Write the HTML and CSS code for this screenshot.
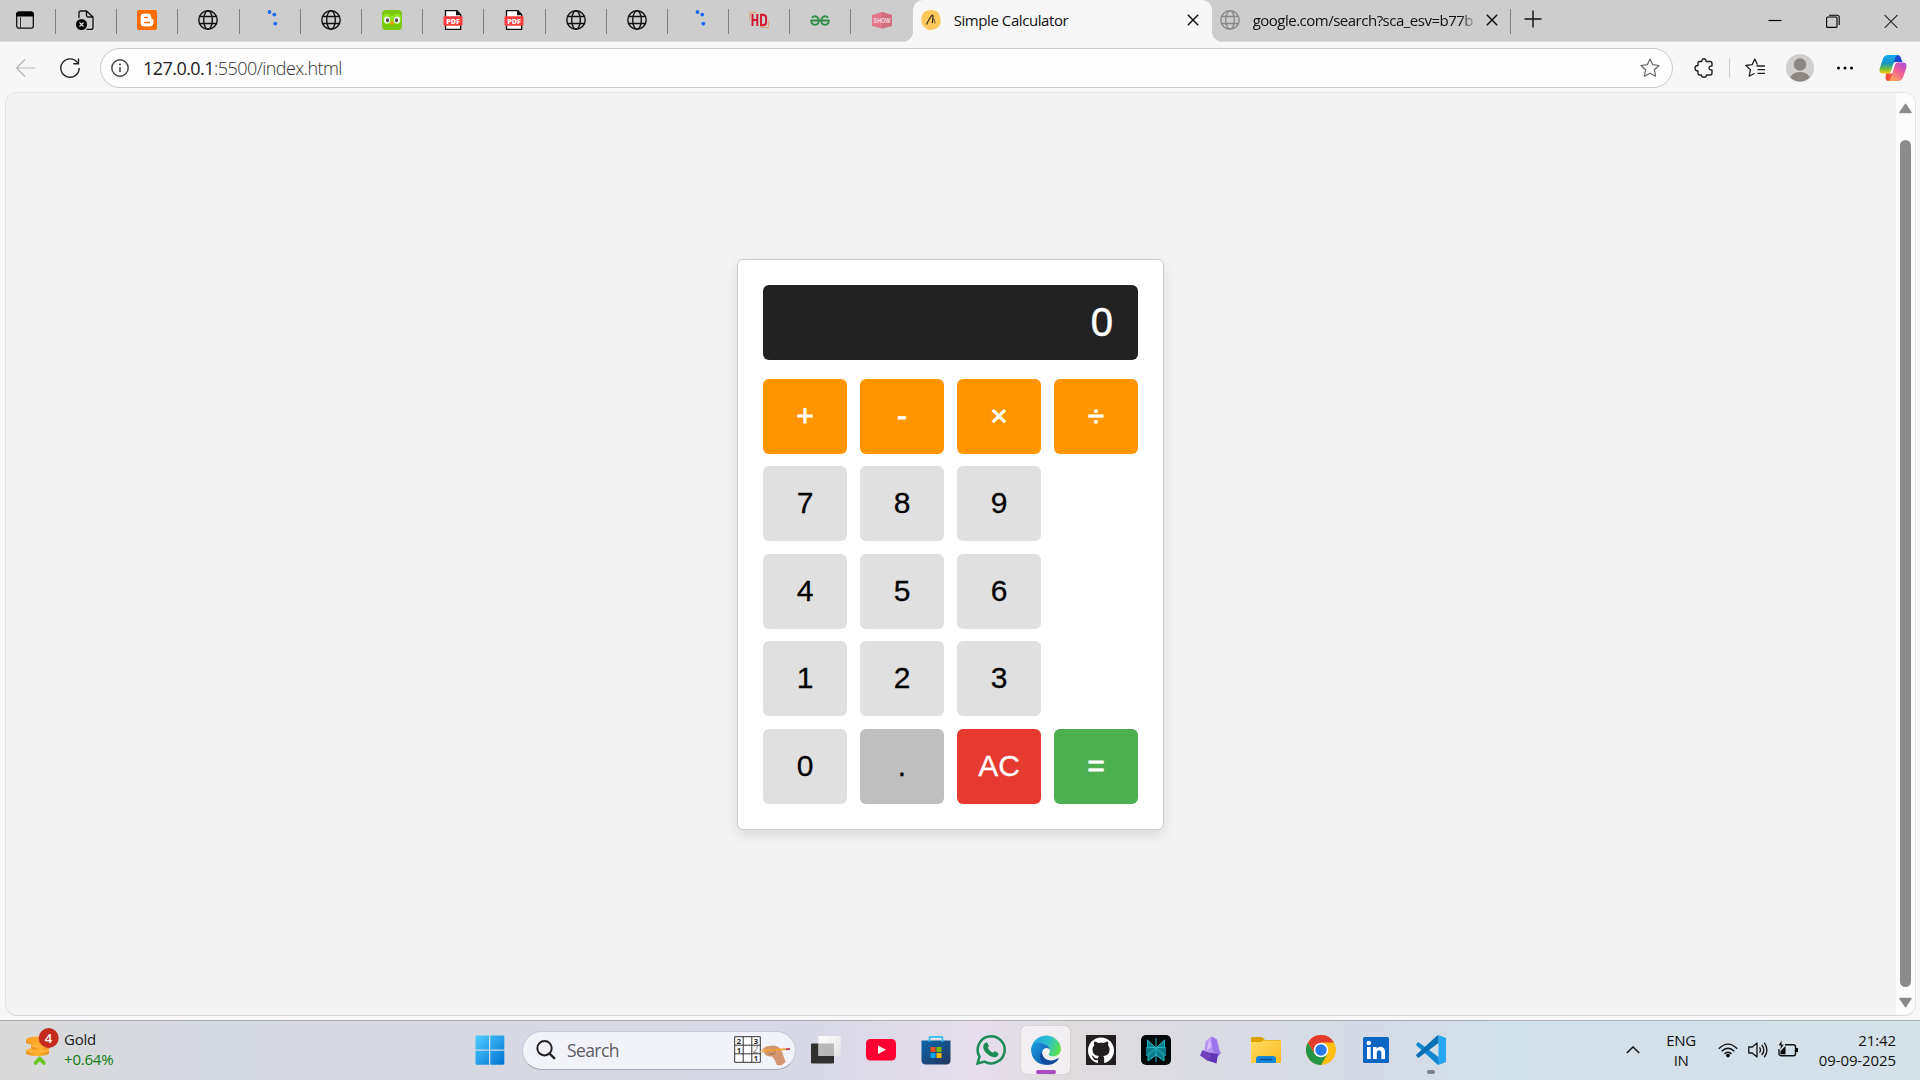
FILE: index.html
```html
<!DOCTYPE html>
<html lang="en">
<head>
<meta charset="utf-8">
<title>Simple Calculator</title>
<link rel="stylesheet" href="styles.css">
</head>
<body>
<svg class="defs" width="0" height="0" aria-hidden="true">
  <symbol id="globe" viewBox="0 0 20 20"><g fill="none" stroke="currentColor" stroke-width="1.4"><circle cx="10" cy="10" r="9.2"/><ellipse cx="10" cy="10" rx="4.3" ry="9.2"/><path d="M1.7 6.5h16.6M1.7 13.5h16.6"/></g></symbol>
  <symbol id="dots" viewBox="0 0 20 20"><g fill="#1a69f5"><circle cx="9.500" cy="2" r="1.9"/><circle cx="14.300" cy="4.600" r="1.9"/><circle cx="15.300" cy="13.600" r="1.9"/></g></symbol>
  <symbol id="cross" viewBox="0 0 12 12"><path d="M.8.8l10.400 10.400M11.200.8L.8 11.200" stroke="currentColor" stroke-width="1.500" fill="none"/></symbol>
  <symbol id="star" viewBox="0 0 20 20"><path d="M10 1l2.700 5.700 6.300.8-4.600 4.300 1.200 6.400L10 15.200l-5.600 3 1.200-6.400L1 7.500l6.300-.8z" fill="none" stroke="currentColor" stroke-width="1.200" stroke-linejoin="round"/></symbol>
</svg>

<header class="tabs">
  <div class="pin first"><svg class="ic" viewBox="0 0 20 20"><rect x="1.700" y="2.200" width="16.600" height="16" rx="2.500" fill="none" stroke="#111" stroke-width="1.300"/><path d="M1 6.500V4.500a3 3 0 0 1 3-3h12a3 3 0 0 1 3 3v2z" fill="#000"/><path d="M5.500 7v11" stroke="#333"/></svg></div>
  <div class="pin"><svg class="ic" viewBox="0 0 20 20"><path d="M3 8V3a2 2 0 0 1 2-2h5.500l6.500 6v10.500a2 2 0 0 1-2 2h-4.500M10.500 1v4.500a1.500 1.500 0 0 0 1.500 1.500h5" fill="none" stroke="#111" stroke-width="1.300"/><circle cx="5.500" cy="14.500" r="5.500"/><path d="M3.500 12.500l4 4M7.500 12.500l-4 4" stroke="#ddd" stroke-width="1.200"/></svg></div>
  <div class="pin"><svg class="ic" viewBox="0 0 20 20"><rect width="20" height="20" rx="2" fill="#ff6c00"/><path d="M7.500 3.500h3.200a3.500 3.500 0 0 1 3.500 3.500c0 1.700.3 1.900 1.200 2 .8.100 1 .5 1 1.200v2.600a3.800 3.800 0 0 1-3.800 3.700H7.400a3.800 3.800 0 0 1-3.800-3.700V7.200a3.800 3.800 0 0 1 3.900-3.700z" fill="#fff"/><path d="M7.700 7.500h2.500M7.700 12.500h4.700" stroke="#ff6c00" stroke-width="1.600" stroke-linecap="round"/></svg></div>
  <div class="pin"><svg class="ic"><use href="#globe"/></svg></div>
  <div class="pin"><svg class="ic"><use href="#dots"/></svg></div>
  <div class="pin"><svg class="ic"><use href="#globe"/></svg></div>
  <div class="pin"><svg class="ic" viewBox="0 0 20 20"><rect width="20" height="20" rx="4" fill="#78c800"/><path d="M1 5q4-3 9 1 5-4 9-1v5q-1 5-6 4H7q-5 1-6-4z" fill="#91e216"/><ellipse cx="5" cy="10" rx="3" ry="3.600" fill="#fff"/><ellipse cx="15" cy="10" rx="3" ry="3.600" fill="#fff"/><ellipse cx="5.500" cy="10.300" rx="1.500" ry="2.100" fill="#444"/><ellipse cx="14.500" cy="10.300" rx="1.500" ry="2.100" fill="#444"/><path d="M7.800 12.200q2.200-1.500 4.400 0L10 15.500z" fill="#ff9400"/></svg></div>
  <div class="pin"><svg class="ic" viewBox="0 0 20 20"><path d="M2.500 .7h11.500l3.700 4v14.600H2.500z" fill="#fff" stroke="#111" stroke-width="1.300"/><path d="M13 .5v4.700h5z" fill="#111"/><rect x=".5" y="6.300" width="19" height="9.500" rx="1" fill="#fb3d3f"/><text class="pdf-label" x="10" y="13.700">PDF</text></svg></div>
  <div class="pin"><svg class="ic" viewBox="0 0 20 20"><path d="M2.500 .7h11.500l3.700 4v14.600H2.500z" fill="#fff" stroke="#111" stroke-width="1.300"/><path d="M13 .5v4.700h5z" fill="#111"/><rect x=".5" y="6.300" width="19" height="9.500" rx="1" fill="#fb3d3f"/><text class="pdf-label" x="10" y="13.700">PDF</text></svg></div>
  <div class="pin"><svg class="ic"><use href="#globe"/></svg></div>
  <div class="pin"><svg class="ic"><use href="#globe"/></svg></div>
  <div class="pin"><svg class="ic"><use href="#dots"/></svg></div>
  <div class="pin"><svg class="ic" viewBox="0 0 20 20"><path d="M.6 9V2.500h7M19.400 11v6.500h-8" fill="none" stroke="#e9a066"/><path d="M3.500 4v12M8.300 4v12M3.500 10h4.800M12 4.800v10.400h1.500q3.600 0 3.600-3V7.800q0-3-3.600-3z" fill="none" stroke="#d3152b" stroke-width="1.900"/></svg></div>
  <div class="pin"><svg class="ic" viewBox="0 0 20 20"><path d="M1.800 7.600q3-2.400 5.400-.4 2.200 2.200 1.400 5-1 2.600-3.700 2.600-3.700-.3-3.700-4.300h17.600q0 4-3.700 4.300-2.700 0-3.700-2.600-.8-2.800 1.400-5 2.400-2 5.400.4" fill="none" stroke="#2f8d46" stroke-width="1.800"/></svg></div>
  <div class="pin last"><svg class="ic" viewBox="0 0 20 20"><path d="M0 5l10-3 10 3v11l-10 2.500L0 16z" fill="#e2778b"/><path d="M10 2v16.500L20 16V5z" fill="#cf6f80"/><text class="show-label" x="10" y="13.300" transform="translate(3.200 0) scale(.68 1)">SHOW</text></svg></div>
  <div class="tab active">
    <svg class="ic" viewBox="0 0 20 20"><path d="M3 2q7-4 14 0 4 6 2 13-2 4-9 5-6 0-9-6-2-7 2-12z" fill="#ffc95c"/><path d="M5.500 14.500Q9.500 6 11.500 5q.9 0-.2 8" fill="none" stroke="#332917" stroke-width="1.200"/><path d="M11.300 13q.3-5 1.300-4.500t1.400 5" fill="none" stroke="#332917" stroke-width=".7"/></svg>
    <span class="title">Simple Calculator</span>
    <svg class="x"><use href="#cross"/></svg>
  </div>
  <div class="tab other">
    <svg class="ic"><use href="#globe"/></svg>
    <span class="title">google.com/search?sca_esv=b77b</span>
    <svg class="x"><use href="#cross"/></svg>
  </div>
  <svg class="plus" viewBox="0 0 18 18"><path d="M9 .5v17M.5 9h17" stroke="#111" stroke-width="1.400"/></svg>
  <div class="win">
    <svg viewBox="0 0 14 14"><path d="M.5 6.500h13" stroke="#000" stroke-width="1.200"/></svg>
    <svg viewBox="0 0 14 14"><rect x=".6" y="3" width="10.400" height="10.400" rx="1" fill="none" stroke="#000" stroke-width="1.100"/><path d="M3 1.200h8.200a2 2 0 0 1 2 2V11" fill="none" stroke="#000" stroke-width="1.100"/></svg>
    <svg viewBox="0 0 14 14"><path d="M.7 1.200l12.600 12.600M13.300 1.200L.7 13.800" stroke="#222" stroke-width="1.100"/></svg>
  </div>
</header>

<nav class="toolbar">
  <svg class="back" viewBox="0 0 20 20"><path d="M20 10H1.500M10 1.500L1.500 10l8.500 8.500" fill="none" stroke="#b5b5b5" stroke-width="1.200"/></svg>
  <svg class="reload" viewBox="0 0 20 20"><path d="M18 5.500A9.200 9.200 0 1 0 19.200 10M18.500.5v5.200h-5.200" fill="none" stroke="#222" stroke-width="1.400"/></svg>
  <div class="address">
    <svg class="info" viewBox="0 0 18 18"><circle cx="9" cy="9" r="8.200" fill="none" stroke="#444" stroke-width="1.400"/><path d="M9 8v5" stroke="#444" stroke-width="1.500"/><circle cx="9" cy="5.500" r="1" fill="#444"/></svg>
    <span class="url"><b>127.0.0.1</b>:5500/index.html</span>
    <svg class="fav"><use href="#star"/></svg>
  </div>
  <div class="tools">
    <svg class="puzzle" viewBox="0 0 20 20"><path d="M5 3.500h2.800C7.500-.1 12.500-.1 12.200 3.500H16a2 2 0 0 1 2 2V8c-4-.6-4 4.600 0 4v3a2 2 0 0 1-2 2h-3.500c0 3-5 3-5 0H5.500A1.500 1.500 0 0 1 4 15.500V13C0 13 0 7.500 4 7.500V5a1.500 1.500 0 0 1 1-1.500z" fill="none" stroke="#222" stroke-width="1.400" stroke-linejoin="round"/></svg>
    <i class="rule"></i>
    <svg class="favs" viewBox="0 0 20 20"><path d="M12.500 6.700L9.800 1 7.100 6.700.8 7.500l4.600 4.300-1.200 6.400 5.400-3" fill="none" stroke="#222" stroke-width="1.300" stroke-linejoin="round"/><path d="M11.500 8H20M12.500 11.700H20M12.500 15.400H20" stroke="#222" stroke-width="1.300"/></svg>
    <svg class="avatar" viewBox="0 0 28 28"><clipPath id="av"><circle cx="14" cy="14" r="13.500"/></clipPath><circle cx="14" cy="14" r="14" fill="#d1cfcd"/><circle cx="14" cy="10.500" r="6.200" fill="#8c8682"/><ellipse cx="14" cy="26" rx="10.500" ry="8" fill="#8c8682" clip-path="url(#av)"/></svg>
    <svg class="more" viewBox="0 0 18 18"><circle cx="2.500" cy="9" r="1.500"/><circle cx="9" cy="9" r="1.500"/><circle cx="15.500" cy="9" r="1.500"/></svg>
    <svg class="copilot" viewBox="0 0 28 28"><defs><linearGradient id="c1" x1="0" y1="0" x2="0" y2="1"><stop offset="0" stop-color="#18a8f5"/><stop offset=".45" stop-color="#1597c4"/><stop offset=".75" stop-color="#72bd3b"/><stop offset="1" stop-color="#ffd00a"/></linearGradient><linearGradient id="c2" x1="1" y1="0" x2=".3" y2="1"><stop offset="0" stop-color="#a34ae8"/><stop offset=".5" stop-color="#ee5c99"/><stop offset="1" stop-color="#ffa65a"/></linearGradient></defs><path d="M15 1h4q2 0 2.700 2.500L23.500 8H17q-3 0-4 3z" fill="#1b46ce"/><path d="M7 19h8l-3 8H9q-2 0-2.500-3z" fill="#f3503b"/><path d="M9 1h10q-2.200.5-3 3.500l-3.700 12Q11.500 19.500 9 19.500H4Q-.5 19.500.8 14L4 4.500Q5.300 1 9 1z" fill="url(#c1)"/><path d="M19 27H9q2.200-.5 3-3.500l3.700-12Q16.500 8.500 19 8.500h5q4.500 0 3.200 5.500L24 23.500Q22.700 27 19 27z" fill="url(#c2)"/><path d="M13.400 13.500q1-4 3.300-4.500-.8.600-1.400 2.800l-2.100 6.500q-.7 2.200-3 2 1.200-.5 1.700-2.500z" fill="#fff"/></svg>
  </div>
</nav>

<main class="window">
  <div class="page">
    <section class="calculator">
      <div class="display">0</div>
      <div class="keys">
        <button class="key op">+</button><button class="key op">-</button><button class="key op">×</button><button class="key op">÷</button>
        <button class="key">7</button><button class="key">8</button><button class="key">9</button><span></span>
        <button class="key">4</button><button class="key">5</button><button class="key">6</button><span></span>
        <button class="key">1</button><button class="key">2</button><button class="key">3</button><span></span>
        <button class="key">0</button><button class="key dot">.</button><button class="key clear">AC</button><button class="key equals">=</button>
      </div>
    </section>
  </div>
  <div class="scroll">
    <svg viewBox="0 0 13 11"><path d="M6.500 1.300L12 9.500H1z" fill="#8b8b8b" stroke="#8b8b8b" stroke-width="1.500" stroke-linejoin="round"/></svg>
    <div class="thumb"></div>
    <svg viewBox="0 0 13 11"><path d="M6.500 9.700L12 1.500H1z" fill="#8b8b8b" stroke="#8b8b8b" stroke-width="1.500" stroke-linejoin="round"/></svg>
  </div>
</main>

<footer class="taskbar">
  <div class="widget">
    <svg class="coins" viewBox="0 0 34 38"><defs><linearGradient id="co"><stop offset="0" stop-color="#f58a1a"/><stop offset=".5" stop-color="#ffb52e"/><stop offset="1" stop-color="#f08a18"/></linearGradient></defs><path d="M0 22.500v2.500c0 4 23 4 23 0v-2.500z" fill="url(#co)"/><ellipse cx="11.500" cy="22.500" rx="11.500" ry="2.800" fill="#ffb13a"/><path d="M5 17.500v2c0 4 19 4 19 0v-2z" fill="url(#co)"/><ellipse cx="14.500" cy="17.500" rx="9.500" ry="2.500" fill="#ffb13a"/><path d="M0 11.500v2.500c0 4 22 4 22 0v-2.500z" fill="url(#co)"/><ellipse cx="11" cy="11.500" rx="11" ry="3" fill="#fda52b"/><path d="M9.500 35l4.200-4.500 4.200 4.500" fill="none" stroke="#67c51c" stroke-width="3.600" stroke-linejoin="round" stroke-linecap="round"/><circle cx="22.700" cy="10" r="10" fill="#c42b1c"/><text x="22.500" y="14.600" text-anchor="middle" font-family="Open Sans, sans-serif" font-size="13" font-weight="600" fill="#fff">4</text></svg>
    <div class="quote"><span>Gold</span><span class="up">+0.64%</span></div>
  </div>
  <div class="apps">
    <div class="app start"><svg width="30" height="30" viewBox="0 0 30 30"><defs><linearGradient id="w" x1="0" y1="0" x2="1" y2="1"><stop offset="0" stop-color="#4fd0ff"/><stop offset="1" stop-color="#0070d2"/></linearGradient></defs><path d="M1.500.5H14v14H.5v-13zM15.300.5h13l1 1v13h-14zM.5 15.700H14v14H1.500l-1-1zM15.300 15.700h14v13l-1 1h-13z" fill="url(#w)"/></svg></div>
    <div class="search">
      <svg class="lens" viewBox="0 0 20 20"><circle cx="8.500" cy="8.200" r="7.200" fill="none" stroke="#222" stroke-width="2"/><path d="M13.500 13.500l4.700 4.700" stroke="#222" stroke-width="2.400" stroke-linecap="round"/></svg>
      <span>Search</span>
      <svg class="sudoku" viewBox="0 0 57 30"><path d="M.7.700h25.600v25.600H.7zM9.200.7v25.600M17.800.7v25.600M.7 9.200h25.600M.7 17.800h25.600" fill="#fff" stroke="#333" stroke-width="1"/><g font-family="Open Sans, sans-serif" font-size="7.500" font-weight="700" text-anchor="middle" fill="#222"><text x="5" y="7.700">2</text><text x="22" y="7.700">3</text><text x="5" y="16.500">1</text><text x="22" y="25">1</text><text x="21.500" y="17" font-size="10" font-weight="400" fill="#777">2</text></g><path d="M27.500 15q3-5 7.500-5l5-.5q6 1 8 6l3.500 10.500q-4 4.500-8.500 3-2-5.500-5-8.500-7 0-7.500-3.500z" fill="#d29670"/><path d="M32 14.500q4 1 6-1l4 2M35 18q3 1 6-1" fill="none" stroke="#a86d4b" stroke-width="1"/><path d="M25 16l5-2.800.3 3.500z" fill="#efc995"/><path d="M29.500 14.700l22-1.500" stroke="#f2a529" stroke-width="1.800"/><path d="M51.500 13.200l4.500-.3" stroke="#c4475b" stroke-width="2"/></svg>
    </div>
    <div class="app"><svg width="30" height="30" viewBox="0 0 30 30"><defs><linearGradient id="tv" x1="0" y1="0" x2="1" y2="1"><stop offset="0" stop-color="#fff"/><stop offset="1" stop-color="#e2e2e2"/></linearGradient></defs><rect y="8.500" width="23" height="20" rx="1" fill="#30302e"/><rect x="7.500" y="1" width="22.300" height="20" rx="1" fill="url(#tv)"/><path d="M7.500 8.500H23V21H7.500z" fill="#b8b8b8"/></svg></div>
    <div class="app"><svg width="30" height="30" viewBox="0 0 30 30"><rect y="4" width="30" height="21.500" rx="4.500" fill="#ff0033"/><path d="M12 10.500v8.500l8-4.200z" fill="#fff"/></svg></div>
    <div class="app"><svg width="30" height="30" viewBox="0 0 30 30"><defs><linearGradient id="st" x1="0" y1="0" x2=".8" y2="1"><stop offset="0" stop-color="#0a68ae"/><stop offset="1" stop-color="#213a63"/></linearGradient></defs><path d="M.5 5.500h29V25q0 4.500-4.500 4.500H5Q.5 29.500.5 25z" fill="url(#st)"/><path d="M8.500 7V3q0-1.200 1.200-1.200h10.600q1.200 0 1.200 1.200v4" fill="none" stroke="#31bdf3" stroke-width="1.700"/><path d="M9.500 12h5v5h-5z" fill="#f25022"/><path d="M15.500 12h5v5h-5z" fill="#7fba00"/><path d="M9.500 18h5v5h-5z" fill="#00a4ef"/><path d="M15.500 18h5v5h-5z" fill="#ffb900"/></svg></div>
    <div class="app"><svg width="30" height="30" viewBox="0 0 30 30"><path d="M1.600 28.400l1.900-6.800A13.500 13.500 0 1 1 8.600 26.600z" fill="none" stroke="#1d8c57" stroke-width="2.500"/><path d="M10 7.500c.9-.3 1.400 0 1.700.8l1 2.400c.2.600 0 1-.9 2 1.300 2.600 3 4 5.400 5.100 1.100-1.500 1.500-1.700 2.100-1.400l2.600 1.300c.8.400.6 1.500.2 2.500-1 2.100-3.800 2.500-6.700 1.300-4.500-1.800-8-5.700-8.200-9.400-.1-2 1.300-4 2.800-4.600z" fill="#1d8c57"/></svg></div>
    <div class="app current"><svg width="30" height="30" viewBox="0 0 30 30"><defs><linearGradient id="e1" x1="0" y1=".3" x2="1" y2=".6"><stop offset="0" stop-color="#2aa4df"/><stop offset=".5" stop-color="#27bfd0"/><stop offset="1" stop-color="#62e447"/></linearGradient><linearGradient id="e2" x1="0" y1="0" x2="1" y2="1"><stop offset="0" stop-color="#1c9be0"/><stop offset="1" stop-color="#0c52a8"/></linearGradient></defs><path d="M.7 11.500A15 15 0 0 1 30 13.500c0 5-3.700 7.800-7.500 7.800-3.700 0-4.800-1-4.800-1.900 0-1 1.300-1.300 1.300-4.100 0-4-5.500-8-11-6.800-4 .9-6.500 2-7.300 3z" fill="url(#e1)"/><path d="M.2 13C1 8.500 5.500 7.500 9 7.700c5 .1 10 3.600 10 7.600-1.600-3.500-7-3-8 2.200-.8 5 3.700 11.800 8 11.700C9.500 32-1 25 .2 13z" fill="url(#e2)"/><path d="M11.200 16.500c-.6 4.200 2.800 9 8.800 9 3.500 0 6-1.600 7-2.200.6-.3 1 .1.600.8C24 30 16 31.500 12 28 8 24.500 8.500 19 11.200 16.500z" fill="#10499b"/></svg><i class="mark"></i></div>
    <div class="app"><svg width="30" height="30" viewBox="0 0 30 30"><path d="M0 0h30v30H0z" fill="#221e20"/><circle cx="15" cy="15.500" r="13" fill="#fff"/><path d="M12 29v-4c-3.500.8-4.500-1-5.500-3-.5-.8-1-1.200-1-1.500 1.700-.2 2.600 1.800 3.500 2.500 1 .7 2.200.5 3 .2 0-1 .5-1.700 1-2.200-4-.5-6.500-2-6.500-6.500 0-1.800.7-3.200 1.700-4.300-.4-1-.3-2.600.2-3.700 1.500 0 2.800.8 3.800 1.600 2-.5 4-.5 5.800 0 1-.8 2.300-1.600 3.800-1.600.5 1.100.6 2.700.2 3.700 1 1.100 1.600 2.500 1.600 4.300 0 4.500-2.500 6-6.500 6.500.7.600 1.100 1.500 1.100 3V29z" fill="#221e20"/></svg></div>
    <div class="app"><svg width="30" height="30" viewBox="0 0 30 30"><rect width="30" height="30" rx="5" fill="#020708"/><path d="M15 13L6.500 5v7H5v9h2v5l8-6 8 6v-5h2v-9h-1.500V5z" fill="#0e7d8b"/><path d="M15 3v24M15 13L6.500 5v7.500h17V5zM15 13l-8 7v6l8-6 8 6v-6z" fill="none" stroke="#21b7c8" stroke-width="1"/></svg></div>
    <div class="app"><svg width="30" height="30" viewBox="0 0 30 30"><path d="M15.500 1.500q-4 3-6 5L8 18l6 2 8-3 1-5-2-8z" fill="#b894f5"/><path d="M15.500 1.500l5 3.500 2 8 2.500 5-3.500 4-5-7z" fill="#9875e8"/><path d="M6.500 15L4 20.500l8 5.500 4-7z" fill="#7040bd"/><path d="M14 17.500l8 1.500-1.500 9.500-9-3 3-4z" fill="#6334b8"/><path d="M13.500 4l-3 12 5-5z" fill="#d3bdfb"/></svg></div>
    <div class="app"><svg width="30" height="30" viewBox="0 0 30 30"><defs><linearGradient id="fo" x1="0" y1="0" x2="1" y2="1"><stop offset="0" stop-color="#ffdc60"/><stop offset="1" stop-color="#fcbc20"/></linearGradient></defs><path d="M1 2h9q2 0 3 2l1 1h15.500V10H0V3z" fill="#dca000"/><path d="M0 7h10l2.500-1.500H30V27q0 1-1 1H1q-1 0-1-1z" fill="url(#fo)"/><path d="M5 28v-4q0-3 3-3h14q3 0 3 3v4z" fill="#1386d8"/><path d="M9 24.500h12" stroke="#0b559b" stroke-width="1.400" stroke-linecap="round"/></svg></div>
    <div class="app"><svg width="30" height="30" viewBox="0 0 30 30"><circle cx="15" cy="15" r="15" fill="#fdbd13"/><path d="M2 7.500A15 15 0 0 0 15 30l6.500-11.500-13 0z" fill="#259447"/><path d="M2 7.500A15 15 0 0 1 28 7.500H15v9l-6.500 2z" fill="#e33b2e"/><circle cx="15" cy="15" r="7.300" fill="#fff"/><circle cx="15" cy="15" r="5.700" fill="#2979ed"/></svg></div>
    <div class="app"><svg width="30" height="30" viewBox="0 0 30 30"><rect x="2" y="2" width="26" height="26" rx="1.500" fill="#0a66c2"/><circle cx="7.800" cy="8" r="2.200" fill="#fff"/><path d="M6 12h3.700v12H6zM12 12h3.600v1.700c1.700-3 8.400-3 8.400 3V24h-3.700v-6.300c0-3.500-4.500-3.300-4.500 0V24H12z" fill="#fff"/></svg></div>
    <div class="app open"><svg width="30" height="30" viewBox="0 0 30 30"><path d="M22.500 0L30 3v24l-7.500 3z" fill="#25a7f2"/><path d="M22.500 22L3 7.500q-.8-.6-1.500 0L.5 9q-.7.800 0 1.500L22 30l1-1z" fill="#1389d2"/><path d="M22.500 8L3 22.500q-.8.600-1.500 0L.5 21q-.7-.8 0-1.500L21.500.300l1 .7z" fill="#0871b5"/></svg><i class="mark"></i></div>
  </div>
  <div class="tray">
    <svg class="chev" viewBox="0 0 14 8"><path d="M.8 7L7 1l6.200 6" fill="none" stroke="#111" stroke-width="1.500"/></svg>
    <div class="lang"><span>ENG</span><span>IN</span></div>
    <svg class="ic" viewBox="0 0 20 20"><g fill="none" stroke="#111" stroke-width="1.400"><path d="M.8 8.700q9.200-9.200 18.400 0M3.700 11.300q6.300-6.300 12.600 0M6.500 13.900q3.500-3.500 7 0"/></g><circle cx="10" cy="15.600" r="1.800"/></svg>
    <svg class="ic" viewBox="0 0 20 20"><g fill="none" stroke="#111" stroke-width="1.300"><path d="M.8 7h3.500L9 3v14l-4.700-4H.8z" stroke-linejoin="round"/><path d="M11.500 7.300q2 2.700 0 5.400M13.800 5q4 5 0 10M16.200 2.700q5.500 7.300 0 14.600"/></g></svg>
    <svg class="ic bat" viewBox="0 0 20 20"><path d="M7 4.700h8.500a2 2 0 0 1 2 2v7a2 2 0 0 1-2 2H3a2 2 0 0 1-2-2V9" fill="none" stroke="#111" stroke-width="1.400"/><path d="M18 8h1.500q.5 0 .5.500v3q0 .5-.5.500H18z"/><path d="M2.500 14.300V11l5-5v8.300z"/><path d="M3.700 0L.5 5.500h2.300L2 10l4-5.500H3.700z" stroke="#d6e2ea" stroke-width=".4"/></svg>
    <div class="clock"><span>21:42</span><span>09-09-2025</span></div>
  </div>
</footer>
</body>
</html>
```
FILE: styles.css
```css
* { box-sizing: border-box; }
body { margin: 0; width: 1920px; height: 1080px; overflow: hidden; display: flex; flex-direction: column; background: #f7f7f7; color: #111; font-family: "Open Sans", "Noto Sans", sans-serif; }
svg { display: block; flex: none; }
.defs { position: absolute; }
.ic { width: 20px; height: 20px; }

/* Tab strip */
.tabs { display: flex; height: 42px; flex: none; background: #cdcdcd; border-bottom: 1px solid #dedede; }
.pin { width: 61.2px; height: 40px; flex: none; display: flex; align-items: center; justify-content: center; padding-right: 1px; background: linear-gradient(#808080, #808080) right 9px / 1px 25px no-repeat; }
.pin.first { width: 56px; padding-right: 6px; }
.pin.last { background: none; }
.pdf-label { font: 800 7.200px "Open Sans", sans-serif; fill: #fff; text-anchor: middle; }
.show-label { font: 700 8px "Liberation Sans", sans-serif; fill: #f5dce0; text-anchor: middle; }
.tab { display: flex; align-items: center; height: 42px; flex: none; font-size: 15px; color: #111; }
.active { position: relative; width: 299px; padding: 0 13px 3px 8px; background: #f7f7f7; border-radius: 10px 10px 0 0; }
.active::before, .active::after { content: ""; position: absolute; bottom: 0; width: 10px; height: 10px; }
.active::before { left: -10px; background: radial-gradient(circle at 0 0, #cdcdcd 9.500px, #f7f7f7 10px); }
.active::after { right: -10px; background: radial-gradient(circle at 100% 0, #cdcdcd 9.500px, #f7f7f7 10px); }
.title { margin-left: 13px; line-height: 24px; white-space: nowrap; overflow: hidden; flex: none; letter-spacing: -.42px; }
.active .title { width: 226px; }
.other { width: 299px; padding: 0 13px 3px 8px; background: linear-gradient(#808080, #808080) right 9px / 1px 25px no-repeat; }
.other .ic { color: #888; }
.other .title { width: 223px; letter-spacing: -.5px; -webkit-mask: linear-gradient(90deg, #000 93%, rgba(0, 0, 0, .1)); mask: linear-gradient(90deg, #000 93%, rgba(0, 0, 0, .1)); }
.x { width: 12px; height: 12px; margin-left: auto; color: #111; }
.plus { width: 18px; height: 18px; margin: 10px 0 0 13px; }
.win { display: flex; gap: 44px; margin: 14px 22px 0 auto; }
.win svg { width: 14px; height: 14px; }

/* Navigation bar */
.toolbar { display: flex; align-items: center; height: 51px; flex: none; padding: 0 13px 0 15px; }
.back { width: 20px; height: 20px; }
.reload { width: 20px; height: 20px; margin: 0 20px 0 25px; }
.address { display: flex; align-items: center; width: 1573px; height: 40px; border: 1px solid #cbcbcb; border-radius: 20px; background: #fdfdfd; padding: 0 12px 0 10px; }
.info { width: 18px; height: 18px; }
.url { margin-left: 14px; font-size: 18px; line-height: 24px; font-weight: 300; letter-spacing: -.55px; color: #333; }
.url b { font-weight: 400; color: #222; }
.fav { width: 20px; height: 20px; margin-left: auto; color: #666; }
.tools { display: flex; align-items: center; flex: 1; padding-left: 21px; }
.puzzle { width: 20px; height: 20px; }
.rule { width: 1px; height: 20px; margin: 0 15px; background: #ccc; }
.favs { width: 20px; height: 20px; }
.avatar { width: 28px; height: 28px; margin-left: 21px; }
.more { width: 18px; height: 18px; margin-left: 22px; }
.copilot { width: 28px; height: 28px; margin-left: auto; }

/* Page viewport */
.window { display: flex; flex: none; width: 1911px; height: 924px; margin: -1px 4px 4px 5px; border: 1px solid #e4e4e4; border-bottom-color: #d8d8d8; border-radius: 12px; overflow: hidden; background: #f3f3f3; }
.page { flex: 1; padding: 166px 0 0 731px; }
.scroll { width: 19px; padding: 10px 3px 8px; background: #fcfcfc; display: flex; flex-direction: column; align-items: center; }
.scroll svg { width: 13px; height: 11px; }
.thumb { width: 11px; height: 847px; margin: 26px 0 10px; border-radius: 6px; background: #8b8b8b; flex: none; }
.calculator { width: 427px; height: 571px; padding: 25px; background: #fff; border: 1px solid #ccc; border-radius: 6px; box-shadow: 0 5px 13px rgba(0, 0, 0, .1); }
.display { height: 75px; margin-bottom: 19px; padding-right: 25px; border-radius: 6px; background: #222; color: #fff; font: 40px/74px "Liberation Sans", Arial, sans-serif; text-align: right; -webkit-text-stroke: .5px; }
.keys { display: grid; grid-template-columns: repeat(4, 84px); grid-auto-rows: 75px; gap: 12.400px 13px; }
.key { padding: 0 0 2px; border: 0; border-radius: 6px; background: #e0e0e0; color: #000; font: 30px/73px "Liberation Sans", Arial, sans-serif; -webkit-text-stroke: .3px; }
.op, .equals { color: #fff; -webkit-text-stroke: .8px; }
.op { background: #ff9500; }
.dot { background: #bfbfbf; }
.clear { background: #e63a30; color: #fff; }
.equals { background: #4caf50; }

/* Taskbar */
.taskbar { display: flex; height: 60px; flex: none; border-top: 1px solid #adadb2; padding-bottom: 1px; font-size: 15px; line-height: 20px; background: linear-gradient(90deg, #d9d9d9 0, #d6dae4 220px, #d6d8e2 420px, #d7d8e5 800px, #e6deec 980px, #dedbdd 1070px, #d9dbe4 1240px, #d4dbe6 1380px, #d2e0e9 1500px, #d5e1e9 100%); }
.widget { display: flex; width: 462px; padding: 7px 0 0 26px; }
.coins { width: 34px; height: 38px; }
.quote { display: flex; flex-direction: column; margin: 1px 0 0 4px; letter-spacing: -.2px; color: #1b1b1b; }
.up { color: #0f7b0f; }
.apps { display: flex; align-items: center; }
.app { position: relative; width: 55px; height: 48px; display: flex; align-items: center; justify-content: center; }
.search { display: flex; align-items: center; width: 274px; height: 39px; margin: 0 2px 0 5px; padding: 0 4px 0 13px; border: 1px solid #c7c9d4; border-bottom-color: #a5a7b3; border-radius: 20px; background: #f2f3f8; font-size: 17.500px; color: #5c5c60; }
.search span { margin-left: 11px; letter-spacing: -.6px; }
.lens { width: 20px; height: 20px; }
.sudoku { width: 57px; height: 30px; margin: 2px 0 0 auto; }
.current::before { content: ""; position: absolute; inset: 0 3px; border-radius: 5px; background: #f1eff1; box-shadow: 0 0 1px #999; }
.current svg { position: relative; }
.mark { position: absolute; bottom: 0; width: 20px; height: 4px; border-radius: 2px; background: #aa4bc2; }
.open .mark { width: 8px; background: #7b7f86; }
.tray { display: flex; align-items: center; margin-left: auto; padding-right: 24px; }
.chev { width: 14px; height: 8px; }
.lang, .clock { display: flex; flex-direction: column; }
.lang { width: 40px; margin: 0 17px 0 28px; align-items: center; letter-spacing: -.4px; }
.chev { margin-right: -7px; }
.tray .ic { margin-right: 10px; }
.tray .bat { margin-right: 0; }
.clock { width: 98px; align-items: flex-end; letter-spacing: -.1px; }
```
